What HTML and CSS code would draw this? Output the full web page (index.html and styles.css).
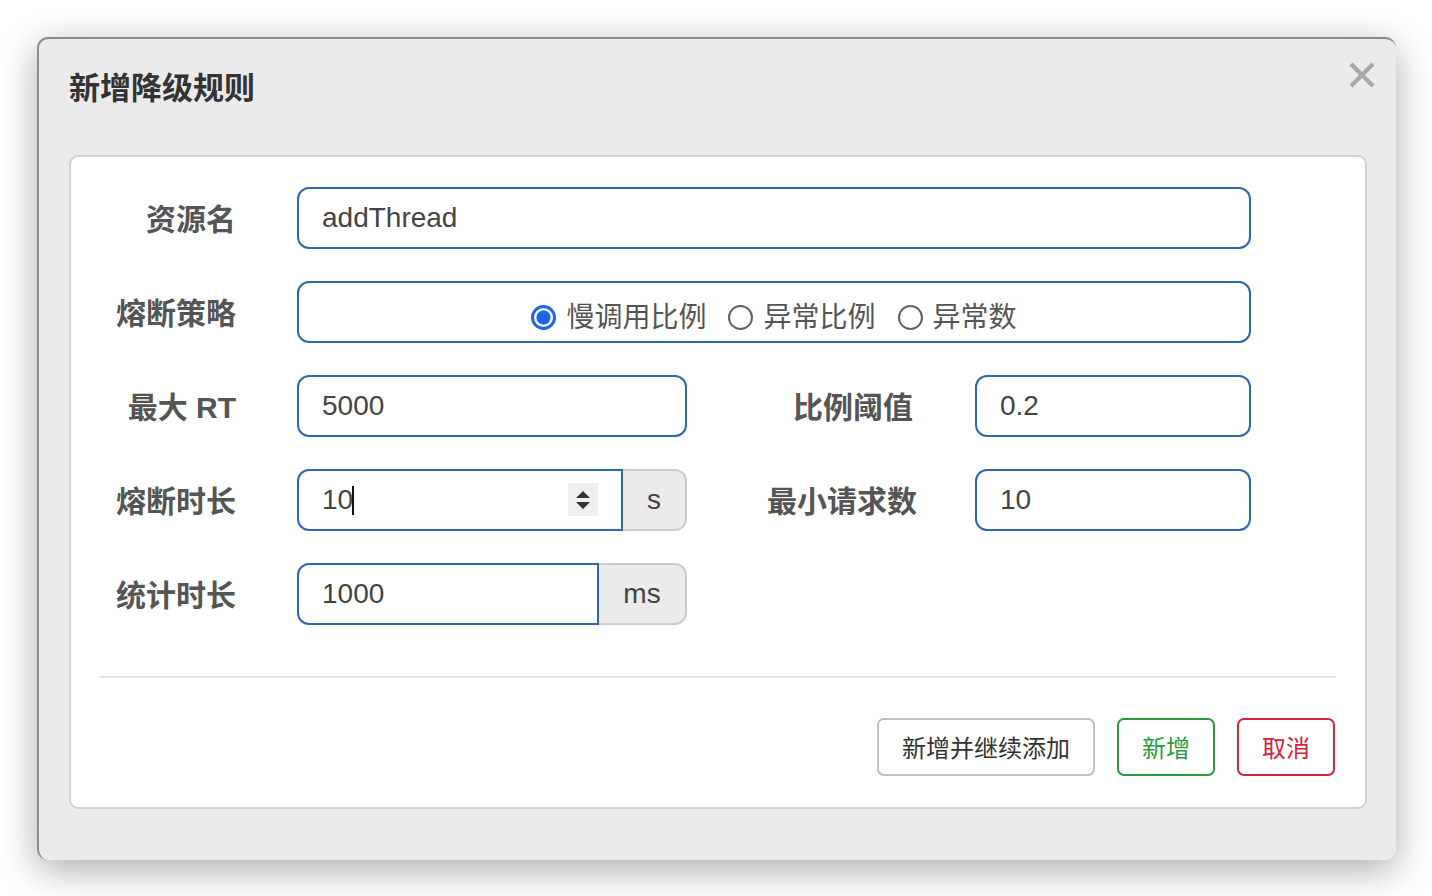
FILE: index.html
```html
<!DOCTYPE html>
<html lang="zh-CN">
<head>
<meta charset="utf-8">
<title>新增降级规则</title>
<link rel="stylesheet" href="styles.css">
</head>
<body>
<div class="dialog">
  <div class="dialog-header">
    <h4 class="dialog-title">新增降级规则</h4>
    <button class="close" type="button" aria-label="关闭">
      <svg width="26" height="26" viewBox="0 0 26 26"><path d="M2 2 L24 24 M24 2 L2 24" stroke="#a8a8a8" stroke-width="4.2" stroke-linecap="butt" fill="none"/></svg>
    </button>
  </div>
  <div class="panel">
    <div class="form">
      <div class="row">
        <label class="label">资源名</label>
        <input class="input input-full" type="text" value="addThread" readonly>
      </div>
      <div class="row">
        <label class="label">熔断策略</label>
        <div class="input input-full radio-box">
          <span class="radio-item"><span class="radio checked"></span>慢调用比例</span>
          <span class="radio-item"><span class="radio"></span>异常比例</span>
          <span class="radio-item"><span class="radio"></span>异常数</span>
        </div>
      </div>
      <div class="row">
        <label class="label">最大 RT</label>
        <input class="input input-half" type="text" value="5000" readonly>
        <label class="label label-2">比例阈值</label>
        <input class="input input-small" type="text" value="0.2" readonly>
      </div>
      <div class="row">
        <label class="label">熔断时长</label>
        <div class="input-group group-half">
          <div class="input input-grouped focus-input">
            <span class="value">10</span><span class="caret"></span>
            <span class="spinner">
              <svg width="18" height="24" viewBox="0 0 18 24"><path d="M9 3 L16 10 L2 10 Z M2 14 L16 14 L9 21 Z" fill="#333"/></svg>
            </span>
          </div>
          <span class="addon addon-s">s</span>
        </div>
        <label class="label label-2 label-wide">最小请求数</label>
        <input class="input input-small" type="text" value="10" readonly>
      </div>
      <div class="row">
        <label class="label">统计时长</label>
        <div class="input-group group-half">
          <input class="input input-grouped" type="text" value="1000" readonly>
          <span class="addon addon-ms">ms</span>
        </div>
      </div>
    </div>
    <div class="divider"></div>
    <div class="actions">
      <button class="btn btn-default" type="button">新增并继续添加</button>
      <button class="btn btn-success" type="button">新增</button>
      <button class="btn btn-danger" type="button">取消</button>
    </div>
  </div>
</div>
</body>
</html>
```

FILE: styles.css
```css
* {
  box-sizing: border-box;
}

html, body {
  margin: 0;
  padding: 0;
  background: #ffffff;
}

body {
  width: 1432px;
  height: 896px;
  overflow: hidden;
  font-family: "Liberation Sans", "Noto Sans CJK SC", sans-serif;
  padding: 37px 0 0 37px;
}

.dialog {
  position: relative;
  width: 1359px;
  height: 823px;
  background: #ebebeb;
  border-top: 2px solid #8c8c8c;
  border-left: 2px solid #8c8c8c;
  border-radius: 11px;
  box-shadow: 0 10px 38px rgba(0, 0, 0, 0.33);
  padding: 0 29px 0 30px;
}

.dialog-header {
  height: 116px;
  padding-top: 30px;
}

.dialog-title {
  margin: 0;
  font-family: "Liberation Sans", "Noto Sans CJK SC", sans-serif;
  font-size: 31px;
  line-height: 40px;
  font-weight: bold;
  color: #333333;
}

.close {
  position: absolute;
  top: 23px;
  right: 21px;
  width: 26px;
  height: 26px;
  padding: 0;
  border: 0;
  background: transparent;
  display: flex;
}

.panel {
  height: 654px;
  background: #ffffff;
  border: 2px solid #d2d2d2;
  border-radius: 9px;
  padding: 30px 29px 0 0;
}

.form {
  display: flex;
  flex-direction: column;
  gap: 32px;
}

.row {
  display: flex;
  align-items: center;
  height: 62px;
}

.label {
  width: 165px;
  margin-right: 61px;
  padding-top: 4px;
  text-align: right;
  font-size: 30px;
  line-height: 40px;
  font-weight: bold;
  color: #555555;
  white-space: nowrap;
}

.label-2 {
  width: 226px;
  margin-right: 62px;
}

.label-wide {
  width: 230px;
  margin-right: 58px;
}

.input {
  height: 62px;
  border: 2px solid #2c67b1;
  border-radius: 12px;
  background: #ffffff;
  padding: 0 0 0 23px;
  font-family: "Liberation Sans", "Noto Sans CJK SC", sans-serif;
  font-size: 28px;
  color: #444444;
  outline: none;
  margin: 0;
}

.input-full {
  width: 954px;
}

.input-half {
  width: 390px;
}

.input-small {
  width: 276px;
}

.radio-box {
  display: flex;
  align-items: center;
  justify-content: center;
  padding: 12px 0 0 0;
  gap: 22px;
  color: #555555;
}

.radio-item {
  display: flex;
  align-items: center;
  gap: 10px;
  font-size: 28px;
  line-height: 36px;
}

.radio {
  width: 25px;
  height: 25px;
  border-radius: 50%;
  border: 2px solid #606060;
  background: #ffffff;
  display: inline-block;
  flex: none;
  margin-top: -2px;
}

.radio.checked {
  border: 3px solid #1a64f5;
  background: radial-gradient(circle, #1a64f5 0, #1a64f5 6.5px, #ffffff 7.5px);
}

.input-group {
  display: flex;
  height: 62px;
}

.group-half {
  width: 390px;
}

.input-grouped {
  flex: 1;
  min-width: 0;
  border-radius: 12px 0 0 12px;
}

.focus-input {
  display: flex;
  align-items: center;
  position: relative;
}

.value {
  line-height: 32px;
}

.caret {
  display: inline-block;
  width: 2px;
  height: 29px;
  background: #111111;
  margin-left: -1px;
}

.spinner {
  position: absolute;
  right: 23px;
  top: 12px;
  width: 30px;
  height: 33px;
  background: #efefef;
  display: flex;
  align-items: center;
  justify-content: center;
}

.addon {
  display: flex;
  align-items: center;
  justify-content: center;
  height: 62px;
  background: #ebebeb;
  border: 2px solid #cccccc;
  border-left: 0;
  border-radius: 0 12px 12px 0;
  font-size: 28px;
  color: #444444;
}

.addon-s {
  width: 64px;
}

.addon-ms {
  width: 88px;
}

.divider {
  height: 2px;
  background: #e3e3e3;
  margin: 51px 0 0 29px;
}

.actions {
  display: flex;
  justify-content: flex-end;
  gap: 22px;
  margin-top: 40px;
  padding-right: 1px;
}

.btn {
  height: 58px;
  padding: 0 23px;
  border-radius: 7px;
  background: #ffffff;
  font-family: "Noto Sans CJK SC", "Liberation Sans", sans-serif;
  font-size: 24px;
  line-height: 30px;
  border: 2px solid #c0c0c0;
  color: #333333;
  cursor: pointer;
}

.btn-default {
  width: 218px;
}

.btn-success {
  width: 98px;
  border-color: #2a9b3a;
  color: #2a9b3a;
}

.btn-danger {
  width: 98px;
  border-color: #d6223a;
  color: #d6223a;
}
```
